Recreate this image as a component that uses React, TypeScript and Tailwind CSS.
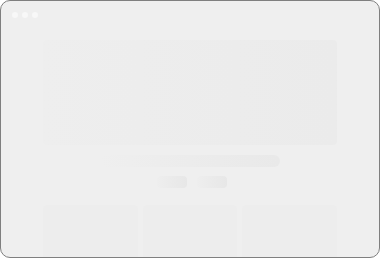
export default function App() {
  return (
    <div className="h-[259px] w-[380px] bg-white">
      <div className="flex h-[258px] w-[380px] flex-col overflow-hidden rounded-[10px] border border-[#7f7f7f] bg-[#efefef]">
        <div className="flex gap-1 px-[11px] pt-[11px]">
          <span className="h-1.5 w-1.5 rounded-full bg-[#f8f8f8]" />
          <span className="h-1.5 w-1.5 rounded-full bg-[#f8f8f8]" />
          <span className="h-1.5 w-1.5 rounded-full bg-[#f8f8f8]" />
        </div>
        <div className="flex flex-col items-center px-[42px] pt-[22px]">
          <div className="h-[105px] w-full rounded-[4px] bg-gradient-to-r from-[#eeeeee] to-[#ebebeb]" />
          <div className="mt-[10px] h-3 w-[180px] rounded-full bg-gradient-to-r from-[#efefef] to-[#e9e9e9]" />
          <div className="ml-[4px] mt-[9px] flex gap-[10px]">
            <div className="h-3 w-[30px] rounded-[4px] bg-gradient-to-r from-[#eeeeee] to-[#e7e7e7]" />
            <div className="h-3 w-[30px] rounded-[4px] bg-gradient-to-r from-[#eeeeee] to-[#e7e7e7]" />
          </div>
          <div className="mt-[17px] grid w-full grid-cols-3 gap-[5px]">
            <div className="h-[60px] rounded-[4px] bg-[#ededed]" />
            <div className="h-[60px] rounded-[4px] bg-[#ededed]" />
            <div className="h-[60px] rounded-[4px] bg-[#ededed]" />
          </div>
        </div>
      </div>
    </div>
  );
}
